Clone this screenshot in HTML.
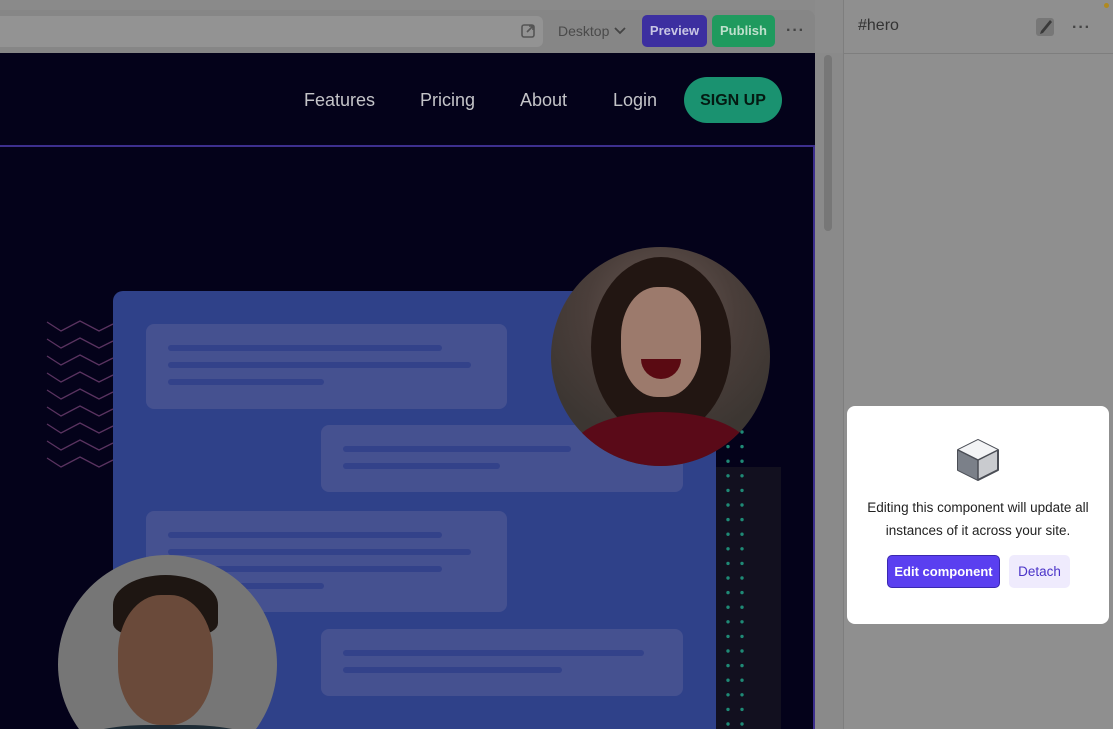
<!DOCTYPE html>
<html><head><meta charset="utf-8"><style>
*{margin:0;padding:0;box-sizing:border-box}
html,body{width:1113px;height:729px;overflow:hidden}
body{background:#8c8c8c;font-family:"Liberation Sans",sans-serif;position:relative}
.abs{position:absolute}
.card{position:absolute;background:#455190;border-radius:8px}
.ln{position:absolute;height:6px;background:#33428a;border-radius:3px}
.dots{position:absolute;width:22px;height:4px}
.dots i{position:absolute;top:0;width:4px;height:4px;border-radius:50%;background:#1f8a76}
</style></head><body>
<!-- toolbar -->
<div class="abs" style="left:0;top:0;width:815px;height:53px;background:#8a8a8a;border-bottom:1px solid #7a7a7a"></div>
<div class="abs" style="left:0;top:10px;width:815px;height:44px;background:#868686;border-radius:0 8px 0 0"></div>
<div class="abs" style="left:0;top:16px;width:543px;height:31px;background:#939393;border-radius:0 6px 6px 0"></div>
<svg class="abs" style="left:520px;top:23px" width="16" height="16" viewBox="0 0 16 16"><rect x="2" y="2" width="12" height="12" rx="2" fill="none" stroke="#555" stroke-width="1.6"/><path d="M7 9 L13 3 M9 3 H13 V7" stroke="#555" stroke-width="1.6" fill="none"/></svg>
<div class="abs" style="left:558px;top:23px;font-size:14px;color:#4a4a4a">Desktop</div>
<svg class="abs" style="left:614px;top:26px" width="12" height="10"><path d="M1 2 L6 7 L11 2" stroke="#444" stroke-width="1.8" fill="none"/></svg>
<div class="abs" style="left:642px;top:15px;width:65px;height:32px;background:#3c2fa0;border-radius:5px;color:#c8c6e4;font-size:13px;font-weight:bold;text-align:center;line-height:32px">Preview</div>
<div class="abs" style="left:712px;top:15px;width:63px;height:32px;background:#1f9a5e;border-radius:5px;color:#bfe0cc;font-size:13px;font-weight:bold;text-align:center;line-height:32px">Publish</div>
<div class="abs" style="left:786px;top:22px;font-size:16px;color:#444;font-weight:bold;letter-spacing:1px">···</div>
<!-- scrollbar -->
<div class="abs" style="left:815px;top:53px;width:28px;height:676px;background:#8a8a8a"></div>
<div class="abs" style="left:824px;top:55px;width:8px;height:176px;background:#777;border-radius:4px"></div>
<!-- right panel -->
<div class="abs" style="left:843px;top:0;width:270px;height:729px;background:#8f8f8f;border-left:1px solid #7e7e7e"></div>
<div class="abs" style="left:843px;top:53px;width:270px;height:1px;background:#7e7e7e"></div>
<div class="abs" style="left:858px;top:17px;font-size:16px;color:#333">#hero</div>
<div class="abs" style="left:1036px;top:18px;width:18px;height:18px;background:#777;border-radius:3px"></div>
<svg class="abs" style="left:1036px;top:16px" width="18" height="20"><path d="M5 15 L14 4 L16 6 L7 17 L4 18 Z" fill="#3a3a3a"/></svg>
<div class="abs" style="left:1072px;top:19px;font-size:16px;color:#444;font-weight:bold;letter-spacing:1px">···</div>
<div class="abs" style="left:1104px;top:3px;width:5px;height:5px;background:#b08a20;border-radius:50%"></div>
<!-- canvas -->
<div class="abs" style="left:0;top:53px;width:815px;height:676px;background:#04021a;overflow:hidden">
 <div class="abs" style="left:304px;top:37px;font-size:18px;color:#c4c4c8">Features</div>
 <div class="abs" style="left:420px;top:37px;font-size:18px;color:#c4c4c8">Pricing</div>
 <div class="abs" style="left:520px;top:37px;font-size:18px;color:#c4c4c8">About</div>
 <div class="abs" style="left:613px;top:37px;font-size:18px;color:#c4c4c8">Login</div>
 <div class="abs" style="left:684px;top:24px;width:98px;height:46px;background:#1a9270;border-radius:23px;color:#041a12;font-size:16px;font-weight:bold;text-align:center;line-height:47px">SIGN UP</div>
 <div class="abs" style="left:0;top:92px;width:815px;height:2px;background:#3d2f8e"></div>
 <div class="abs" style="left:813px;top:92px;width:2px;height:600px;background:#3d2f8e"></div>
 <svg class="abs" style="left:45px;top:266px" width="70" height="150"><g stroke="#5a3360" stroke-width="1.3" fill="none">
 <path d="M2 3 L16 12 L35 2 L54 12 L68 5"/><path d="M2 20 L16 29 L35 19 L54 29 L68 22"/><path d="M2 37 L16 46 L35 36 L54 46 L68 39"/><path d="M2 54 L16 63 L35 53 L54 63 L68 56"/><path d="M2 71 L16 80 L35 70 L54 80 L68 73"/><path d="M2 88 L16 97 L35 87 L54 97 L68 90"/><path d="M2 105 L16 114 L35 104 L54 114 L68 107"/><path d="M2 122 L16 131 L35 121 L54 131 L68 124"/><path d="M2 139 L16 148 L35 138 L54 148 L68 141"/></g></svg>
 <div class="abs" style="left:716px;top:414px;width:65px;height:262px;background:#12101f"></div>
 <svg class="abs" style="left:722px;top:375px" width="30" height="301"><g fill="#1f8a76">
 <circle cx="6" cy="4" r="1.7"/><circle cx="20" cy="4" r="1.7"/><circle cx="6" cy="18.6" r="1.7"/><circle cx="20" cy="18.6" r="1.7"/><circle cx="6" cy="33.2" r="1.7"/><circle cx="20" cy="33.2" r="1.7"/><circle cx="6" cy="47.8" r="1.7"/><circle cx="20" cy="47.8" r="1.7"/><circle cx="6" cy="62.4" r="1.7"/><circle cx="20" cy="62.4" r="1.7"/><circle cx="6" cy="77" r="1.7"/><circle cx="20" cy="77" r="1.7"/><circle cx="6" cy="91.6" r="1.7"/><circle cx="20" cy="91.6" r="1.7"/><circle cx="6" cy="106.2" r="1.7"/><circle cx="20" cy="106.2" r="1.7"/><circle cx="6" cy="120.8" r="1.7"/><circle cx="20" cy="120.8" r="1.7"/><circle cx="6" cy="135.4" r="1.7"/><circle cx="20" cy="135.4" r="1.7"/><circle cx="6" cy="150" r="1.7"/><circle cx="20" cy="150" r="1.7"/><circle cx="6" cy="164.6" r="1.7"/><circle cx="20" cy="164.6" r="1.7"/><circle cx="6" cy="179.2" r="1.7"/><circle cx="20" cy="179.2" r="1.7"/><circle cx="6" cy="193.8" r="1.7"/><circle cx="20" cy="193.8" r="1.7"/><circle cx="6" cy="208.4" r="1.7"/><circle cx="20" cy="208.4" r="1.7"/><circle cx="6" cy="223" r="1.7"/><circle cx="20" cy="223" r="1.7"/><circle cx="6" cy="237.6" r="1.7"/><circle cx="20" cy="237.6" r="1.7"/><circle cx="6" cy="252.2" r="1.7"/><circle cx="20" cy="252.2" r="1.7"/><circle cx="6" cy="266.8" r="1.7"/><circle cx="20" cy="266.8" r="1.7"/><circle cx="6" cy="281.4" r="1.7"/><circle cx="20" cy="281.4" r="1.7"/><circle cx="6" cy="296" r="1.7"/><circle cx="20" cy="296" r="1.7"/></g></svg>
 <div class="abs" style="left:113px;top:238px;width:603px;height:438px;background:#2f4189;border-radius:10px 10px 0 0">
  <div class="card" style="left:33px;top:33px;width:361px;height:85px"><div class="ln" style="left:22px;top:21px;width:274px"></div><div class="ln" style="left:22px;top:38px;width:303px"></div><div class="ln" style="left:22px;top:55px;width:156px"></div></div>
  <div class="card" style="left:208px;top:134px;width:362px;height:67px"><div class="ln" style="left:22px;top:21px;width:228px"></div><div class="ln" style="left:22px;top:38px;width:157px"></div></div>
  <div class="card" style="left:33px;top:220px;width:361px;height:101px"><div class="ln" style="left:22px;top:21px;width:274px"></div><div class="ln" style="left:22px;top:38px;width:303px"></div><div class="ln" style="left:22px;top:55px;width:274px"></div><div class="ln" style="left:22px;top:72px;width:156px"></div></div>
  <div class="card" style="left:208px;top:338px;width:362px;height:67px"><div class="ln" style="left:22px;top:21px;width:301px"></div><div class="ln" style="left:22px;top:38px;width:219px"></div></div>
 </div>
 <!-- woman -->
 <div class="abs" style="left:551px;top:194px;width:219px;height:219px;border-radius:50%;overflow:hidden;background:radial-gradient(circle at 50% 30%,#6a5a55 0,#4a3e3a 40%,#3c3632 70%)">
  <div class="abs" style="left:40px;top:10px;width:140px;height:180px;border-radius:50%;background:#221612"></div>
  <div class="abs" style="left:70px;top:40px;width:80px;height:110px;border-radius:45%;background:#9c7a6c"></div>
  <div class="abs" style="left:90px;top:112px;width:40px;height:20px;border-radius:0 0 20px 20px;background:#5a0a12"></div>
  <div class="abs" style="left:20px;top:165px;width:180px;height:80px;border-radius:50% 50% 0 0;background:#5a0a18"></div>
 </div>
 <!-- man -->
 <div class="abs" style="left:58px;top:502px;width:219px;height:219px;border-radius:50%;overflow:hidden;background:#767676">
  <div class="abs" style="left:55px;top:20px;width:105px;height:60px;border-radius:50% 50% 20% 20%;background:#1e1612"></div>
  <div class="abs" style="left:60px;top:40px;width:95px;height:130px;border-radius:45%;background:#6a4a3a"></div>
  <div class="abs" style="left:10px;top:170px;width:200px;height:60px;border-radius:40% 40% 0 0;background:#1e2c36"></div>
 </div>
</div>
<!-- popup -->
<div class="abs" style="left:847px;top:406px;width:262px;height:218px;background:#fff;border-radius:8px"></div>
<svg class="abs" style="left:955px;top:438px" width="46" height="44" viewBox="0 0 46 44"><path d="M23 2 L43 12 L43 32 L23 42 L3 32 L3 12 Z" fill="#c9cbcf" stroke="#4a4d55" stroke-width="2" stroke-linejoin="round"/><path d="M3 12 L23 22 L23 42 L3 32 Z" fill="#7b8089"/><path d="M23 2 L43 12 L23 22 L3 12 Z" fill="#f3f4f6"/><path d="M3 12 L23 22 L43 12 M23 22 V42" stroke="#4a4d55" stroke-width="1.5" fill="none"/></svg>
<div class="abs" style="left:847px;top:496px;width:262px;text-align:center;font-size:13.5px;line-height:23px;color:#222">Editing this component will update all<br>instances of it across your site.</div>
<div class="abs" style="left:887px;top:555px;width:113px;height:33px;background:#5a3ff0;border:1px solid #3a28b0;border-radius:5px;color:#fff;font-size:13px;font-weight:bold;text-align:center;line-height:31px">Edit component</div>
<div class="abs" style="left:1009px;top:555px;width:61px;height:33px;background:#efebfd;border-radius:5px;color:#4a33c8;font-size:13.5px;text-align:center;line-height:33px">Detach</div>
</body></html>
